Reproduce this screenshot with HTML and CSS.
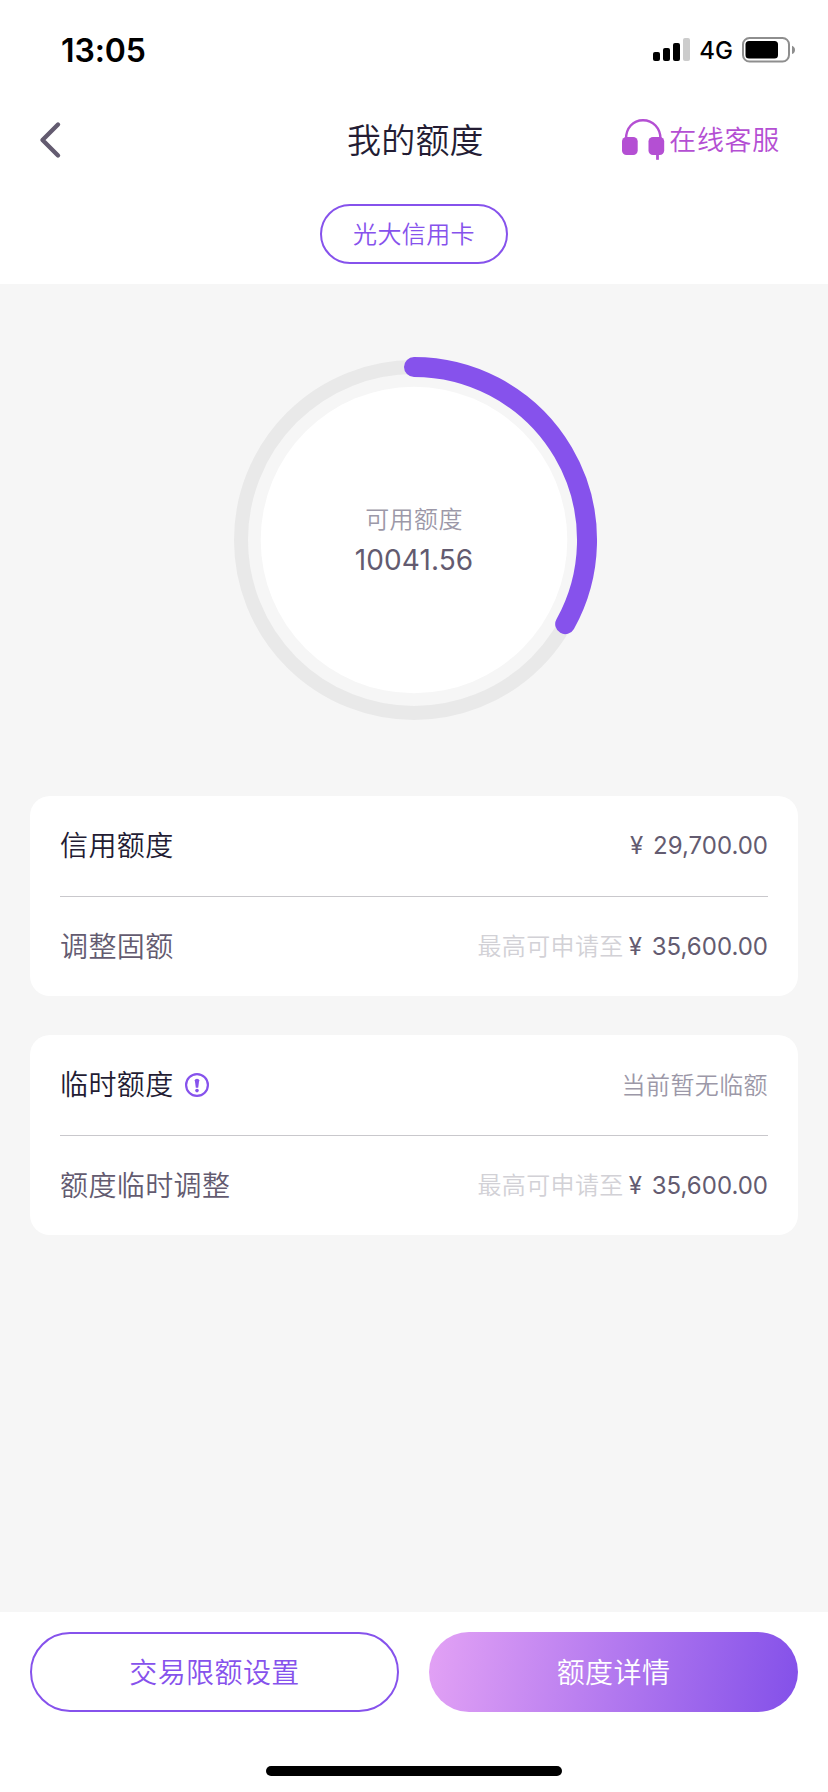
FILE: index.html
```html
<!DOCTYPE html>
<html lang="zh-CN">
<head>
<meta charset="utf-8">
<title>我的额度</title>
<link rel="stylesheet" href="styles.css">
</head>
<body>
<div class="app">
  <div class="status-bar">
    <span class="clock">13:05</span>
    <div class="status-icons">
      <svg class="signal" width="38" height="24" viewBox="0 0 38 24">
        <rect x="0" y="14" width="7" height="9" rx="2"/>
        <rect x="10" y="10" width="7" height="13" rx="2"/>
        <rect x="20" y="5" width="7" height="18" rx="2"/>
        <rect x="30" y="0" width="7" height="23" rx="2" fill="#ccc"/>
      </svg>
      <span class="network">4G</span>
      <svg class="battery" width="54" height="26" viewBox="0 0 54 26">
        <rect x="1" y="1" width="46" height="23.5" rx="6.5" fill="none" stroke="#8e8e8e" stroke-width="2"/>
        <rect x="3.500" y="4" width="32.500" height="17.500" rx="3.500"/>
        <path d="M50 8.800Q53 10 53 12.900T50 17z" fill="#8e8e8e"/>
      </svg>
    </div>
  </div>

  <header class="nav">
    <svg class="back" width="24" height="40" viewBox="0 0 24 40">
      <path d="M20 4.500 4.500 20 20 35.500" fill="none" stroke="#635b70" stroke-width="4.400" stroke-linecap="round" stroke-linejoin="round"/>
    </svg>
    <h1 class="title">我的额度</h1>
    <div class="service">
      <svg class="headset" width="43" height="42" viewBox="0 0 43 42">
        <path d="M4 20C4 9 11 1.300 21 1.300S38.500 9 38.500 20" fill="none" stroke="#b44fd3" stroke-width="2.400"/>
        <rect x="0" y="18" width="15.700" height="18" rx="4.500" fill="#b44fd3"/>
        <rect x="26.500" y="18" width="15.700" height="18" rx="4.500" fill="#b44fd3"/>
        <path d="M35.500 33v7.800" stroke="#b44fd3" stroke-width="2.800"/>
      </svg>
      <span class="service-text">在线客服</span>
    </div>
  </header>

  <div class="tabs"><div class="chip">光大信用卡</div></div>

  <main class="content">
    <div class="gauge">
      <svg class="gauge-ring" width="370" height="370" viewBox="-185 -185 370 370">
        <circle r="173" fill="none" stroke="#e9e9e9" stroke-width="14"/>
        <circle r="153.300" fill="#fff"/>
        <path d="M0-173A173 173 0 0 1 151.200 84.100" fill="none" stroke="#8652ec" stroke-width="20" stroke-linecap="round"/>
      </svg>
      <div class="gauge-text">
        <span class="gauge-label">可用额度</span>
        <span class="gauge-value">10041.56</span>
      </div>
    </div>

    <section class="card">
      <div class="row">
        <span class="label">信用额度</span>
        <span class="amount"><span class="yen">¥</span><span class="num">29,700.00</span></span>
      </div>
      <div class="row">
        <span class="label muted">调整固额</span>
        <span class="amount"><span class="hint">最高可申请至</span><span class="yen">¥</span><span class="num">35,600.00</span></span>
      </div>
    </section>

    <section class="card">
      <div class="row">
        <span class="label">临时额度</span>
        <svg class="info" width="24" height="24" viewBox="0 0 24 24">
          <circle cx="12" cy="12" r="10.900" fill="none" stroke="#8652ec" stroke-width="2.200"/>
          <path d="M9.800 7.300Q9.800 5.700 12 5.700T14.200 7.300L13.200 14.700H10.800z" fill="#8652ec"/>
          <circle cx="12" cy="17.600" r="1.800" fill="#8652ec"/>
        </svg>
        <span class="none">当前暂无临额</span>
      </div>
      <div class="row">
        <span class="label muted">额度临时调整</span>
        <span class="amount"><span class="hint">最高可申请至</span><span class="yen">¥</span><span class="num">35,600.00</span></span>
      </div>
    </section>
  </main>

  <footer class="footer">
    <div class="actions">
      <div class="btn outline">交易限额设置</div>
      <div class="btn filled">额度详情</div>
    </div>
    <div class="home-indicator"></div>
  </footer>
</div>
</body>
</html>
```
FILE: styles.css
```css
* { box-sizing: border-box; }
body {
  margin: 0;
  background: #fff;
  font-family: Inter, "Noto Sans CJK SC", sans-serif;
  font-weight: 350;
  white-space: nowrap;
}
svg { display: block; flex: none; }
.app { width: 828px; height: 1792px; display: flex; flex-direction: column; }

.status-bar {
  height: 88px;
  padding: 12px 32px 0 61px;
  display: flex;
  align-items: center;
  justify-content: space-between;
  color: #000;
}
.clock { font-size: 32px; font-weight: 600; letter-spacing: -.1px; }
.status-icons { display: flex; align-items: center; }
.network { font-size: 24px; font-weight: 500; margin: 0 9px 0 8px; }

.nav {
  height: 104px;
  padding: 0 48px 0 38px;
  display: grid;
  grid-template-columns: 1fr 136px 1fr;
  align-items: center;
}
.title { margin: 0 -10px 4px 6px; font-size: 34px; font-weight: 350; letter-spacing: .2px; color: #231c33; }
.service { justify-self: end; display: flex; align-items: center; gap: 4px; }
.service-text { padding-bottom: 3px; font-size: 27px; letter-spacing: .7px; color: #b44fd3; }

.tabs { height: 92px; padding-top: 12px; display: flex; justify-content: center; align-items: flex-start; }
.chip {
  width: 188px;
  height: 60px;
  padding-bottom: 4px;
  border: 2px solid #8652ec;
  border-radius: 30px;
  color: #8652ec;
  font-size: 24px;
  letter-spacing: .4px;
  display: flex;
  align-items: center;
  justify-content: center;
}

.content { flex: 1; background: #f6f6f6; padding: 71px 30px 0; }
.gauge { width: 370px; margin: 0 auto 71px; display: grid; place-items: center; }
.gauge-ring, .gauge-text { grid-area: 1 / 1; }
.gauge-text { display: flex; flex-direction: column; align-items: center; }
.gauge-label { font-size: 24px; line-height: 40px; letter-spacing: .4px; color: #9c98a8; }
.gauge-value { font-size: 28px; line-height: 40px; font-weight: 400; letter-spacing: .1px; color: #635b70; }

.card { height: 200px; margin-bottom: 39px; padding: 0 30px; background: #fff; border-radius: 20px; }
.row { height: 100px; display: flex; align-items: center; }
.row + .row { border-top: 1px solid #c9c8cc; }
.label { padding-bottom: 4px; font-size: 28px; letter-spacing: .4px; color: #231c33; }
.muted { color: #635b70; }
.amount { margin-left: auto; padding-bottom: 1px; display: flex; align-items: center; font-size: 24px; font-weight: 400; color: #635b70; }
.yen { width: 23px; }
.hint { margin-right: 5px; padding-bottom: 3px; letter-spacing: .4px; color: #d2d1d6; font-weight: 350; }
.info { margin-left: 11px; }
.none { margin-left: auto; padding-bottom: 3px; font-size: 24px; letter-spacing: .4px; color: #9c98a8; }

.footer { height: 180px; padding: 20px 30px 16px; display: flex; flex-direction: column; justify-content: space-between; align-items: center; background: #fff; }
.actions { width: 100%; display: grid; grid-template-columns: 1fr 1fr; gap: 30px; }
.btn {
  height: 80px;
  padding-bottom: 3px;
  border-radius: 40px;
  font-size: 28px;
  letter-spacing: .4px;
  display: flex;
  align-items: center;
  justify-content: center;
}
.outline { border: 2px solid #8652ec; color: #8652ec; }
.filled { color: #fff; background: linear-gradient(100deg, #e3a2f5, #8350e9); }
.home-indicator { width: 296px; height: 10px; border-radius: 5px; background: #000; }
```
